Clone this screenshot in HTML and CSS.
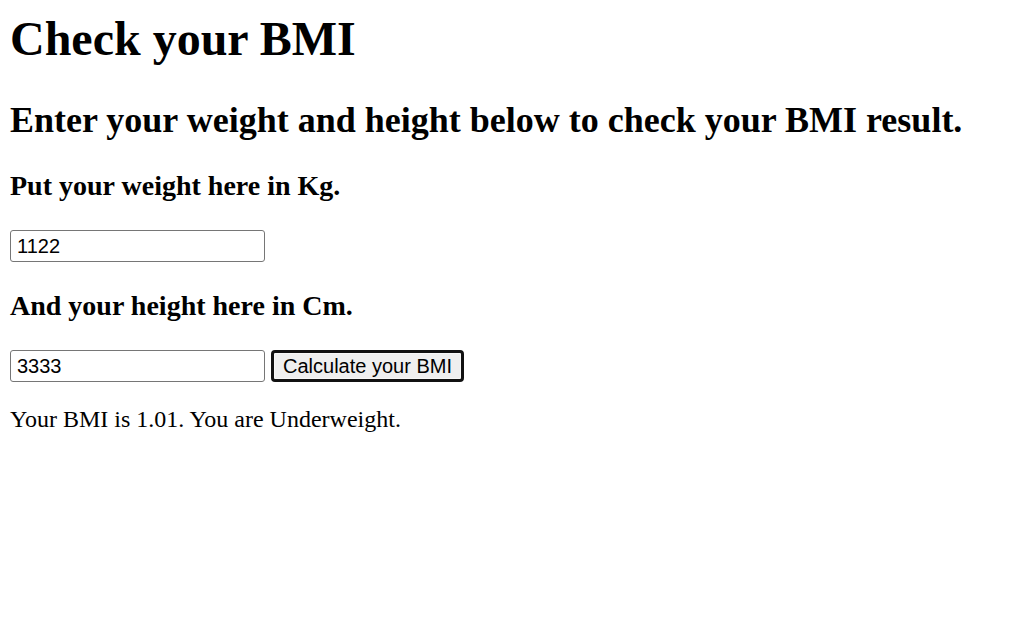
FILE: index.html
```html
<!DOCTYPE html>
<html lang="en">
<head>
<meta charset="utf-8">
<title>BMI Calculator</title>
<link rel="stylesheet" href="styles.css">
</head>
<body class="page">
  <h1 class="title">Check your BMI</h1>
  <h2 class="subtitle">Enter your weight and height below to check your BMI result.</h2>
  <h3 class="label">Put your weight here in Kg.</h3>
  <div class="row">
    <input class="field" type="text" value="1122">
  </div>
  <h3 class="label label-second">And your height here in Cm.</h3>
  <div class="row">
    <input class="field" type="text" value="3333">
    <button class="btn" type="button">Calculate your BMI</button>
  </div>
  <p class="result">Your BMI is 1.01. You are Underweight.</p>
</body>
</html>
```

FILE: styles.css
```css
html, body {
  background: #fff;
}
.page {
  margin: 0;
  padding: 0 0 0 10px;
  font-family: "Liberation Serif", "Times New Roman", serif;
  color: #000;
}
.title {
  margin: 12px 0 0;
  font-size: 48px;
  line-height: 53px;
  font-weight: bold;
}
.subtitle {
  margin: 35px 0 0;
  font-size: 36px;
  line-height: 40px;
  font-weight: bold;
}
.label {
  margin: 30px 0 0;
  font-size: 28px;
  line-height: 31px;
  font-weight: bold;
}
.label-second {
  margin-top: 28px;
}
.row {
  display: flex;
  align-items: center;
  gap: 6px;
  margin-top: 29px;
}
.field {
  box-sizing: border-box;
  width: 255px;
  height: 32px;
  margin: 0;
  padding: 0 0 0 6px;
  border: 1px solid #767676;
  border-radius: 3px;
  background: #fff;
  font-family: "Liberation Sans", Arial, sans-serif;
  font-size: 20px;
  color: #000;
}
.btn {
  box-sizing: border-box;
  width: 193px;
  height: 32px;
  margin: 0;
  padding: 0;
  border: 3px solid #111;
  border-radius: 4px;
  background: #efefef;
  box-shadow: inset 0 0 0 1px #f7f7f7;
  font-family: "Liberation Sans", Arial, sans-serif;
  font-size: 20px;
  color: #000;
}
.result {
  margin: 24px 0 0;
  font-size: 24px;
  line-height: 27px;
}
```
